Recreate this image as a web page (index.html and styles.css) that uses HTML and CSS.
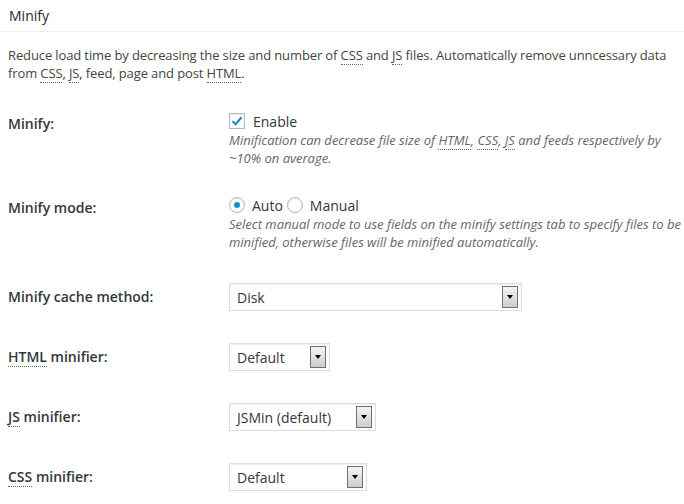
FILE: index.html
```html
<!DOCTYPE html>
<html lang="en">
<head>
    <meta charset="UTF-8">
    <title>Minify</title>
    <link rel="stylesheet" href="styles.css">
</head>
<body>
    <div class="postbox">
        <h3 class="box-title">Minify</h3>
        <p class="intro">Reduce load time by decreasing the size and number of <abbr>CSS</abbr> and <abbr>JS</abbr> files. Automatically remove unncessary data from <abbr>CSS</abbr>, <abbr>JS</abbr>, feed, page and post <abbr>HTML</abbr>.</p>

        <div class="row">
            <div class="label label-top">Minify:</div>
            <div class="field">
                <div class="choice">
                    <span class="checkbox">
                        <svg width="12" height="12" viewBox="0 0 12 12"><path d="M1.5 6.3 L4.6 9.2 L10.6 2.2" fill="none" stroke="#1e8cbe" stroke-width="2.2" stroke-linejoin="miter"/></svg>
                    </span>
                    <span>Enable</span>
                </div>
                <p class="desc">Minification can decrease file size of <abbr>HTML</abbr>, <abbr>CSS</abbr>, <abbr>JS</abbr> and feeds respectively by ~10% on average.</p>
            </div>
        </div>

        <div class="row row-radio">
            <div class="label label-top">Minify mode:</div>
            <div class="field">
                <div class="choice">
                    <span class="radio checked"></span>
                    <span>Auto</span>
                    <span class="radio second"></span>
                    <span>Manual</span>
                </div>
                <p class="desc">Select manual mode to use fields on the minify settings tab to specify files to be minified, otherwise files will be minified automatically.</p>
            </div>
        </div>

        <div class="row row-select">
            <div class="label">Minify cache method:</div>
            <div class="field">
                <div class="select select-cache"><span class="value">Disk</span><span class="arrow"></span></div>
            </div>
        </div>

        <div class="row row-select">
            <div class="label"><abbr>HTML</abbr> minifier:</div>
            <div class="field">
                <div class="select select-html"><span class="value">Default</span><span class="arrow"></span></div>
            </div>
        </div>

        <div class="row row-select">
            <div class="label"><abbr>JS</abbr> minifier:</div>
            <div class="field">
                <div class="select select-js"><span class="value">JSMin (default)</span><span class="arrow"></span></div>
            </div>
        </div>

        <div class="row row-select">
            <div class="label"><abbr>CSS</abbr> minifier:</div>
            <div class="field">
                <div class="select select-css"><span class="value">Default</span><span class="arrow"></span></div>
            </div>
        </div>
    </div>
</body>
</html>
```

FILE: styles.css
```css
body {
    margin: 0;
    background: #fff;
    color: #444;
    font-family: "Open Sans", "Liberation Sans", sans-serif;
    font-size: 13px;
    overflow: hidden;
}
abbr {
    text-decoration: none;
    border-bottom: 1px dotted #666;
}
.box-title {
    margin: 0;
    padding: 6px 9px 6px;
    font-size: 14px;
    line-height: 19px;
    font-weight: 400;
    color: #23282d;
    border-bottom: 1px solid #eee;
}
.intro {
    margin: 14px 0 15px 8px;
    line-height: 18px;
    letter-spacing: -0.12px;
    color: #444;
}
.row {
    display: grid;
    grid-template-columns: 221px 1fr;
    padding: 14px 0 14px 8px;
}
.row-radio {
    padding-bottom: 16px;
}
.row-select {
    padding: 16px 0 16px 8px;
    align-items: center;
}
.label {
    font-size: 14px;
    line-height: 20px;
    font-weight: 600;
    color: #32373c;
}
.label-top {
    padding-top: 3px;
}
.choice {
    display: flex;
    align-items: center;
    height: 20px;
    font-size: 14px;
    color: #32373c;
}
.checkbox {
    width: 14px;
    height: 14px;
    border: 1px solid #b4b9be;
    background: #fff;
    box-shadow: inset 0 1px 2px rgba(0, 0, 0, 0.1);
    display: flex;
    align-items: center;
    justify-content: center;
    margin-right: 8px;
}
.radio {
    width: 14px;
    height: 14px;
    border: 1px solid #b4b9be;
    border-radius: 50%;
    background: #fff;
    box-shadow: inset 0 1px 2px rgba(0, 0, 0, 0.1);
    display: flex;
    align-items: center;
    justify-content: center;
    margin-right: 7px;
}
.radio.checked::after {
    content: "";
    width: 6px;
    height: 6px;
    border-radius: 50%;
    background: #1e8cbe;
}
.radio.second {
    margin-left: 4px;
}
.desc {
    margin: 0;
    font-size: 13px;
    line-height: 18px;
    font-style: italic;
    color: #666;
}
.select {
    display: flex;
    align-items: center;
    justify-content: space-between;
    box-sizing: border-box;
    height: 28px;
    padding: 0 3px 0 7px;
    border: 1px solid #ddd;
    background: #fff;
    box-shadow: inset 0 1px 2px rgba(0, 0, 0, 0.07);
    font-size: 14px;
    color: #32373c;
}
.select-cache { width: 293px; }
.select-html { width: 101px; }
.select-js { width: 147px; }
.select-css { width: 138px; }
.arrow {
    box-sizing: border-box;
    width: 16px;
    height: 22px;
    border: 1px solid #707070;
    background: linear-gradient(#f4f4f4, #cdcdcd);
    display: flex;
    align-items: center;
    justify-content: center;
}
.arrow::after {
    content: "";
    border-left: 3px solid transparent;
    border-right: 3px solid transparent;
    border-top: 4px solid #000;
}
```
